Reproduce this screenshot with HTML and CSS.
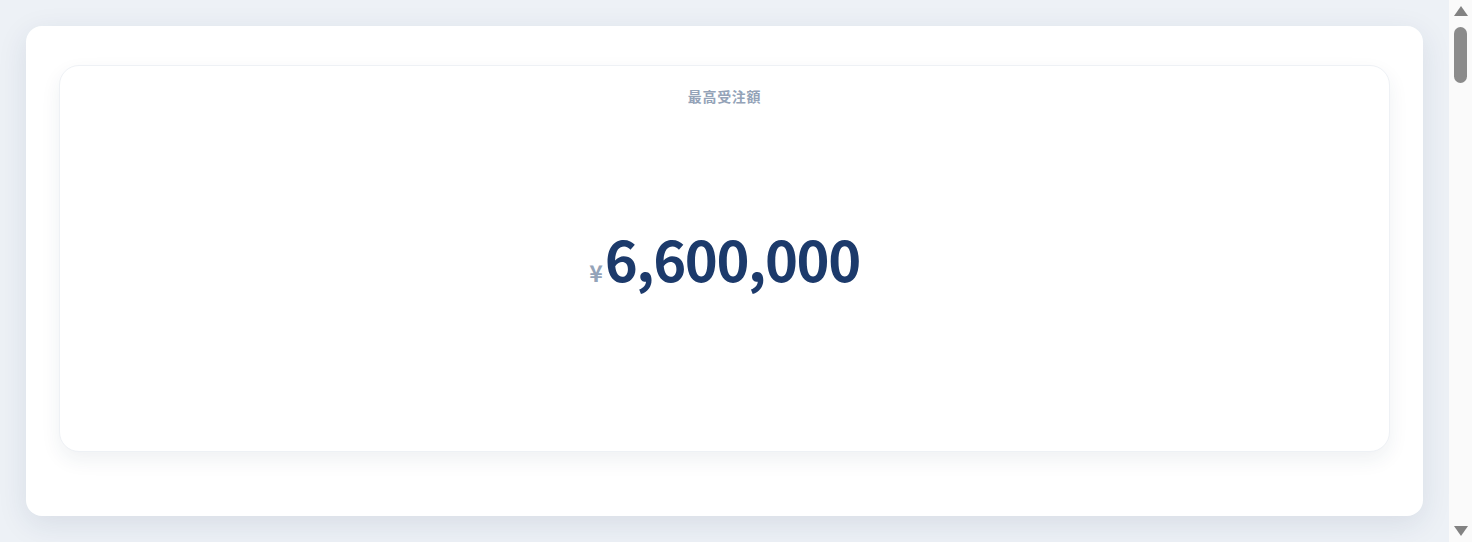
FILE: index.html
```html
<!DOCTYPE html>
<html lang="ja">
    <head>
        <meta charset="UTF-8" />
        <meta name="viewport" content="width=device-width, initial-scale=1.0" />
        <title>最高受注額</title>
        <link rel="stylesheet" href="styles.css">
    </head>
    <body>
        <main class="dashboard">
            <section class="panel">
                <div class="stat-card">
                    <h3 class="stat-label">最高受注額</h3>
                    <div class="stat-value">
                        <span class="currency">¥</span>
                        <span class="amount">6,600,000</span>
                    </div>
                </div>
            </section>
        </main>
        <aside class="scrollbar">
            <span class="scroll-arrow up"></span>
            <div class="scroll-track">
                <div class="scroll-thumb"></div>
            </div>
            <span class="scroll-arrow down"></span>
        </aside>
    </body>
</html>
```

FILE: styles.css
```css
* {
    margin: 0;
    padding: 0;
    box-sizing: border-box;
}

body {
    display: flex;
    height: 100vh;
    overflow: hidden;
    font-family: "Noto Sans CJK JP", "Noto Sans", sans-serif;
    background-color: #edf1f6;
}

.dashboard {
    flex: 1;
    padding: 26px;
}

.panel {
    background-color: #ffffff;
    border-radius: 16px;
    padding: 39px 33px 64px;
    box-shadow: 0 8px 30px rgba(30, 50, 90, 0.1);
}

.stat-card {
    display: flex;
    flex-direction: column;
    align-items: center;
    height: 387px;
    padding-top: 20px;
    border: 1px solid #eef1f5;
    border-radius: 20px;
    background-color: #ffffff;
    box-shadow: 0 8px 20px rgba(30, 50, 90, 0.07);
}

.stat-label {
    font-size: 14px;
    font-weight: 700;
    letter-spacing: 0.05em;
    color: #94a3b8;
}

.stat-value {
    flex: 1;
    display: flex;
    align-items: baseline;
    justify-content: center;
    padding-top: 124px;
}

.currency {
    font-size: 23px;
    font-weight: 700;
    color: #94a3b8;
    margin-right: 2px;
}

.amount {
    font-size: 56px;
    font-weight: 700;
    line-height: 1;
    letter-spacing: -0.025em;
    color: #1c3a6b;
}

/* scrollbar rail on the right edge */
.scrollbar {
    display: flex;
    flex-direction: column;
    align-items: center;
    width: 23px;
    padding: 6px 0;
    background-color: #fafafa;
}

.scroll-arrow {
    width: 0;
    height: 0;
    border-left: 7px solid transparent;
    border-right: 7px solid transparent;
}

.scroll-arrow.up {
    border-bottom: 10px solid #828282;
}

.scroll-arrow.down {
    border-top: 10px solid #828282;
}

.scroll-track {
    flex: 1;
    padding-top: 11px;
}

.scroll-thumb {
    width: 13px;
    height: 56px;
    border-radius: 7px;
    background-color: #8b8b8b;
}
```
